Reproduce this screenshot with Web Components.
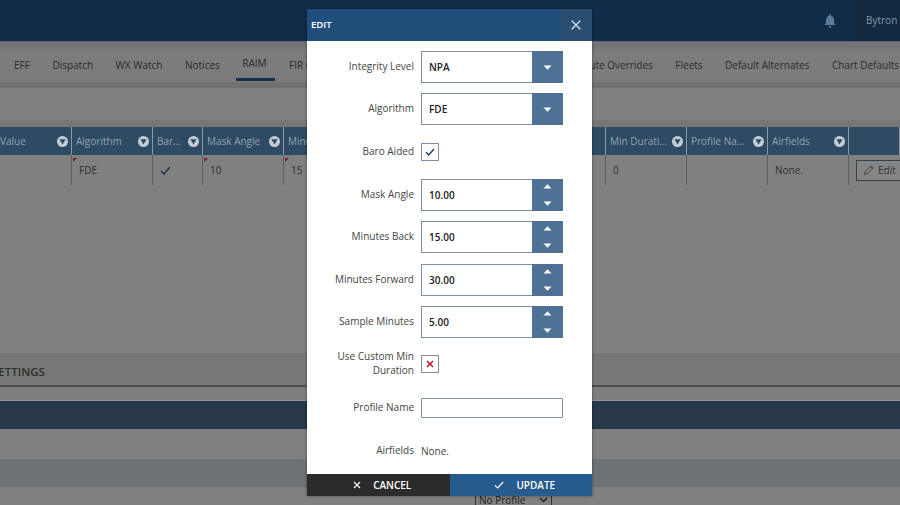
<!DOCTYPE html>
<html>
<head>
<meta charset="utf-8">
<title>RAIM</title>
<style>
  html, body { margin: 0; padding: 0; }
  body {
    width: 900px;
    height: 505px;
    overflow: hidden;
    position: relative;
    background: #808080;
    font-family: "Open Sans", "Liberation Sans", sans-serif;
  }
</style>
</head>
<body>
<app-header></app-header>
<tab-bar></tab-bar>
<raim-table></raim-table>
<settings-panel></settings-panel>

<edit-dialog>
  <form-row label="Integrity Level" top="10"><select-field value="NPA"></select-field></form-row>
  <form-row label="Algorithm" top="10"><select-field value="FDE"></select-field></form-row>
  <form-row label="Baro Aided" top="18"><check-box state="on"></check-box></form-row>
  <form-row label="Mask Angle" top="18"><spin-field value="10.00"></spin-field></form-row>
  <form-row label="Minutes Back" top="10"><spin-field value="15.00"></spin-field></form-row>
  <form-row label="Minutes Forward" top="11"><spin-field value="30.00"></spin-field></form-row>
  <form-row label="Sample Minutes" top="10"><spin-field value="5.00"></spin-field></form-row>
  <form-row label="Use Custom Min Duration" top="12"><check-box state="off"></check-box></form-row>
  <form-row label="Profile Name" top="21"><text-box></text-box></form-row>
  <form-row label="Airfields" top="23"><span style="font-size:10px;color:#444;line-height:20px">None.</span></form-row>
</edit-dialog>

<script>
class AppHeader extends HTMLElement {
  constructor() {
    super();
    this.attachShadow({ mode: "open" }).innerHTML = `
    <style>
      :host {
        display: flex;
        justify-content: flex-end;
        align-items: center;
        height: 41px;
        background: #102c49;
        border-bottom: 1px solid #5d6a75;
      }
      svg { margin-right: 19px; }
      .user {
        width: 34px;
        padding-left: 11px;
        height: 41px;
        line-height: 41px;
        background: #12293f;
        color: #8296a8;
        font-size: 10px;
        white-space: nowrap;
        overflow: hidden;
      }
    </style>
    <svg width="12" height="14" viewBox="0 0 12 14">
      <path d="M6 0.5c.6 0 1 .4 1 1v.5c2 .5 3 2 3 4v3l1.6 2H.4L2 9V6c0-2 1-3.500 3-4v-.5c0-.6.4-1 1-1zM4.500 12.300h3c0 .9-.7 1.500-1.500 1.500s-1.500-.6-1.500-1.500z" fill="#5d7d9b"/>
    </svg>
    <div class="user">Bytron</div>`;
  }
}
customElements.define("app-header", AppHeader);

class TabBar extends HTMLElement {
  constructor() {
    super();
    const left = ["EFF", "Dispatch", "WX Watch", "Notices", "RAIM", "FIR Crossings"];
    const right = ["Route Overrides", "Fleets", "Default Alternates", "Chart Defaults"];
    const tab = (t) => `<span class="tab ${t == "RAIM" ? "on" : ""}">${t}</span>`;
    this.attachShadow({ mode: "open" }).innerHTML = `
    <style>
      :host {
        display: flex;
        justify-content: space-between;
        height: 33px;
        padding: 0 1px 0 14px;
        background: #7c7c7c;
        border-top: 7px solid #757575;
        border-bottom: 6px solid #717171;
        font-size: 10px;
        color: #2b2b2b;
        white-space: nowrap;
      }
      div { display: flex; gap: 22.500px; }
      .tab { position: relative; line-height: 33px; }
      .on { line-height: 29px; }
      .on::after {
        content: "";
        position: absolute;
        left: -6px;
        right: -8px;
        top: 29px;
        height: 3px;
        background: #12304d;
      }
    </style>
    <div>${left.map(tab).join("")}</div>
    <div>${right.map(tab).join("")}</div>`;
  }
}
customElements.define("tab-bar", TabBar);

class RaimTable extends HTMLElement {
  constructor() {
    super();
    const cols = [
      ["Value", ""], ["Algorithm", "FDE", 1], ["Bar...", "check"], ["Mask Angle", "10", 1], ["Minutes Back", "15", 1],
      ["", ""], ["", ""], ["", ""],
      ["Min Durati...", "0"], ["Profile Na...", ""], ["Airfields", "None."]
    ];
    const funnel = `<svg width="11" height="11" viewBox="0 0 11 11"><circle cx="5.500" cy="5.500" r="5.500" fill="#c3ccd4"/><path d="M2.400 3.300h6.200L5.500 8.400z" fill="#2f4b64"/></svg>`;
    const check = `<svg width="11" height="9" viewBox="0 0 11 9"><path d="M1 5l3 3 6-7" fill="none" stroke="#14304a" stroke-width="1.300"/></svg>`;
    const head = cols.map((c) => `<div class="th"><span>${c[0]}</span>${c[0] ? funnel : ""}</div>`).join("");
    const body = cols.map((c) => `<div class="td ${c[2] ? "flag" : ""}">${c[1] == "check" ? check : c[1]}</div>`).join("");
    this.attachShadow({ mode: "open" }).innerHTML = `
    <style>
      :host {
        display: block;
        margin-top: 32px;
        border-top: 7px solid #777;
        font-size: 10px;
      }
      .grid {
        display: grid;
        grid-template-columns: 72px 81px 50px 81px repeat(4, 80.500px) 81px 81px 81px 51px;
        grid-template-rows: 28px 30px;
        overflow: hidden;
      }
      .th {
        display: flex;
        align-items: center;
        justify-content: space-between;
        gap: 3px;
        padding: 0 3px 0 4px;
        background: #2f4b64;
        color: #8fa1b2;
        border-right: 1px solid #8a99a6;
        overflow: hidden;
        white-space: nowrap;
      }
      .th span { overflow: hidden; }
      .th svg { flex: none; }
      .th:first-child { padding-left: 0; }
      .td {
        position: relative;
        display: flex;
        align-items: center;
        padding-left: 7px;
        color: #2f2f2f;
        border-right: 1px solid #5f5f5f;
      }
      .flag::before {
        content: "";
        position: absolute;
        left: 1px;
        top: 3px;
        border-top: 4px solid #7c1f2a;
        border-right: 4px solid transparent;
      }
      .action { padding-left: 7px; display: flex; align-items: center; }
      .edit {
        display: flex;
        align-items: center;
        gap: 3px;
        box-sizing: border-box;
        width: 60px;
        height: 21px;
        flex: none;
        padding-left: 6px;
        border: 1px solid #34424e;
        background: #858585;
        color: #333;
      }
    </style>
    <div class="grid">
      ${head}<div class="th"></div>
      ${body}<div class="action"><div class="edit">
        <svg width="12" height="12" viewBox="0 0 12 12"><path d="M1.500 10.500l.7-2.800 6-6 2.100 2.100-6 6zM7.400 2.500l2.100 2.100" fill="none" stroke="#3a3a3a" stroke-width=".9"/></svg>
        Edit</div></div>
    </div>`;
  }
}
customElements.define("raim-table", RaimTable);

class SettingsPanel extends HTMLElement {
  constructor() {
    super();
    this.attachShadow({ mode: "open" }).innerHTML = `
    <style>
      :host { display: block; margin-top: 168px; }
      .title {
        height: 32px;
        line-height: 37px;
        background: #777;
        border-bottom: 2px solid #4e4e4e;
        font-size: 11.500px;
        font-weight: 600;
        color: #2e2e2e;
        text-indent: -8px;
        overflow: hidden;
      }
      .gap { height: 13px; background: #7e7e7e; border-bottom: 1px solid #8b949b; }
      .dark { height: 28px; background: #26384a; }
      .plain { height: 30px; background: #808080; }
      .alt { height: 28px; background: #6e7274; }
      .last { height: 19px; background: #808080; padding: 3px 0 0 475px; box-sizing: border-box; overflow: hidden; }
      .pick {
        display: flex;
        justify-content: space-between;
        align-items: center;
        box-sizing: border-box;
        width: 77px;
        height: 20px;
        padding: 0 3px;
        border: 1px solid #333;
        font-size: 10px;
        color: #222;
      }
    </style>
    <div class="title">SETTINGS</div>
    <div class="gap"></div>
    <div class="dark"></div>
    <div class="plain"></div>
    <div class="alt"></div>
    <div class="last"><div class="pick">No Profile
      <svg width="9" height="6" viewBox="0 0 9 6"><path d="M1 1l3.500 3.500L8 1" fill="none" stroke="#222" stroke-width="1.500"/></svg>
    </div></div>`;
  }
}
customElements.define("settings-panel", SettingsPanel);

class EditDialog extends HTMLElement {
  constructor() {
    super();
    this.attachShadow({ mode: "open" }).innerHTML = `
    <style>
      :host {
        position: absolute;
        left: 307px;
        top: 9px;
        width: 285px;
        height: 487px;
        display: flex;
        flex-direction: column;
        background: #fff;
        box-shadow: 0 0 3px rgba(0,0,0,.45);
      }
      header {
        display: flex;
        justify-content: space-between;
        align-items: center;
        height: 32px;
        padding-left: 4px;
        background: #1f4e7b;
        color: #fff;
        font-size: 9.500px;
        font-weight: 600;
      }
      .close {
        display: flex;
        align-items: center;
        justify-content: center;
        width: 32px;
        height: 32px;
        background: #2a4e72;
      }
      .body { flex: 1; }
      footer { display: flex; height: 22px; font-size: 10px; font-weight: 600; color: #fff; }
      footer div {
        flex: 1;
        display: flex;
        align-items: center;
        justify-content: center;
        gap: 12px;
        padding-left: 8px;
      }
      .cancel { background: #2b2b2b; }
      .update { background: #265b8d; }
    </style>
    <header><span style="margin-top:-1px">EDIT</span>
      <div class="close"><svg width="10" height="10" viewBox="0 0 10 10"><path d="M.7.7l8.600 8.600M9.300.7L.7 9.300" stroke="#d9e2ea" stroke-width="1.300"/></svg></div>
    </header>
    <div class="body"><slot></slot></div>
    <footer>
      <div class="cancel"><svg width="8" height="8" viewBox="0 0 8 8"><path d="M1 1l6 6M7 1L1 7" stroke="#fff" stroke-width="1.100"/></svg>CANCEL</div>
      <div class="update"><svg width="10" height="8" viewBox="0 0 10 8"><path d="M.8 4.300l2.800 2.700L9.200 1" fill="none" stroke="#fff" stroke-width="1.100"/></svg>UPDATE</div>
    </footer>`;
  }
}
customElements.define("edit-dialog", EditDialog);

class FormRow extends HTMLElement {
  constructor() {
    super();
    this.attachShadow({ mode: "open" }).innerHTML = `
    <style>
      :host {
        display: grid;
        grid-template-columns: 107px 142px;
        column-gap: 7px;
        align-items: center;
      }
      label { text-align: right; font-size: 10px; line-height: 13.500px; color: #444; }
      .field { display: flex; align-items: center; }
    </style>
    <label></label>
    <div class="field"><slot></slot></div>`;
  }
  connectedCallback() {
    this.shadowRoot.querySelector("label").textContent = this.getAttribute("label");
    this.style.marginTop = this.getAttribute("top") + "px";
  }
}
customElements.define("form-row", FormRow);

const fieldStyle = `
  :host { display: flex; width: 142px; height: 32px; box-sizing: border-box; border: 1px solid #7d90a5; border-right: 0; }
  .val { flex: 1; padding-left: 7px; font-size: 10px; font-weight: 600; line-height: 31px; color: #222; }
  .btn {
    width: 31px;
    margin: -1px 0;
    background: #4f7196;
    display: flex;
    flex-direction: column;
    align-items: center;
    justify-content: space-around;
  }
  svg { display: block; }
`;
const arrowDown = `<svg width="9" height="5" viewBox="0 0 9 5"><path d="M.5.500h8L4.500 4.700z" fill="#fff"/></svg>`;
const arrowUp = `<svg width="9" height="5" viewBox="0 0 9 5"><path d="M.5 4.500h8L4.500.300z" fill="#fff"/></svg>`;

class SelectField extends HTMLElement {
  constructor() {
    super();
    this.attachShadow({ mode: "open" }).innerHTML = `
    <style>${fieldStyle}</style>
    <div class="val"></div>
    <div class="btn">${arrowDown}</div>`;
  }
  connectedCallback() {
    this.shadowRoot.querySelector(".val").textContent = this.getAttribute("value");
  }
}
customElements.define("select-field", SelectField);

class SpinField extends HTMLElement {
  constructor() {
    super();
    this.attachShadow({ mode: "open" }).innerHTML = `
    <style>${fieldStyle}
      .btn { justify-content: space-between; padding: 5px 0 5px; box-sizing: border-box; height: 32px; }
    </style>
    <div class="val"></div>
    <div class="btn">${arrowUp}${arrowDown}</div>`;
  }
  connectedCallback() {
    this.shadowRoot.querySelector(".val").textContent = this.getAttribute("value");
  }
}
customElements.define("spin-field", SpinField);

class CheckBox extends HTMLElement {
  constructor() {
    super();
    this.attachShadow({ mode: "open" }).innerHTML = `
    <style>
      :host {
        display: flex;
        align-items: center;
        justify-content: center;
        box-sizing: border-box;
        width: 18px;
        height: 18px;
        border: 1px solid #7d90a5;
      }
    </style>`;
  }
  connectedCallback() {
    const on = this.getAttribute("state") == "on";
    this.shadowRoot.innerHTML += on
      ? `<svg width="10" height="8" viewBox="0 0 10 8"><path d="M1 4.300l2.700 2.700L9 1" fill="none" stroke="#14395e" stroke-width="1.300"/></svg>`
      : `<svg width="8" height="8" viewBox="0 0 8 8"><path d="M1 1l6 6M7 1L1 7" stroke="#c8102e" stroke-width="1.500"/></svg>`;
  }
}
customElements.define("check-box", CheckBox);

class TextBox extends HTMLElement {
  constructor() {
    super();
    this.attachShadow({ mode: "open" }).innerHTML = `
    <style>
      :host { display: block; box-sizing: border-box; width: 142px; height: 20px; border: 1px solid #7d90a5; border-radius: 1px; }
    </style>`;
  }
}
customElements.define("text-box", TextBox);
</script>
</body>
</html>
